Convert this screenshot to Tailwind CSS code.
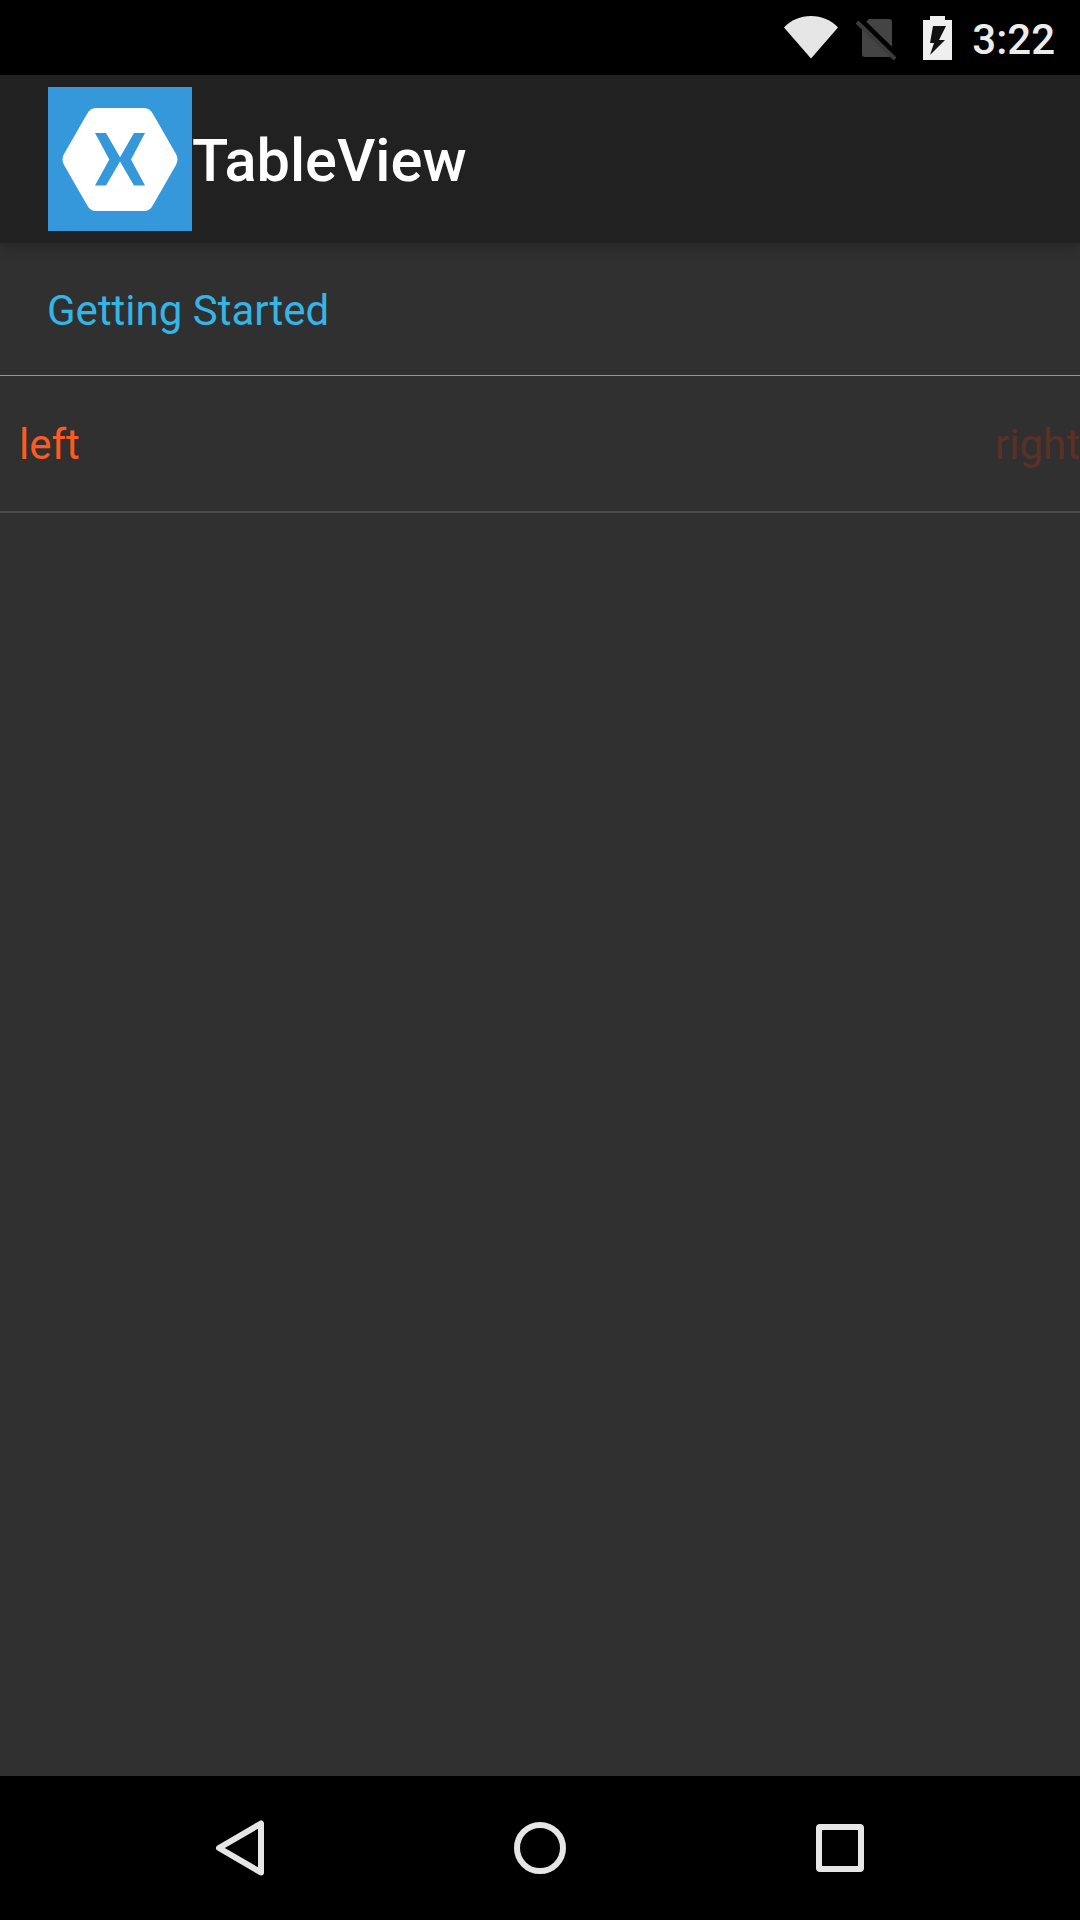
<!DOCTYPE html>
<html lang="en">
<head>
  <meta charset="UTF-8" />
  <title>TableView</title>
  <script src="https://cdn.jsdelivr.net/npm/@tailwindcss/browser@4"></script>
</head>
<body class="bg-[#303030] font-['Roboto',sans-serif]">
<div class="w-[1080px] h-[1920px] flex flex-col overflow-hidden">

  <!-- status bar -->
  <div class="h-[75px] bg-black flex items-center justify-end pr-[25px] shrink-0">
    <svg class="w-[54px] h-[44px] -mt-[1px]" viewBox="0 0 54 44"><path d="M0 12.500C7 5 16.500 1 27 1s20 4 27 11.500L27 43.500z" fill="#e6e6e6"/></svg>
    <svg class="w-[44px] h-[44px] ml-[17px]" viewBox="0 0 44 44">
      <path d="M14 3h20a3 3 0 0 1 3 3v32a3 3 0 0 1-3 3H10a3 3 0 0 1-3-3V10z" fill="#444"/>
      <path d="M5 3l38 37" stroke="#000" stroke-width="5"/>
      <path d="M2 6l38 37" stroke="#3c3c3c" stroke-width="4"/>
    </svg>
    <svg class="w-[29px] h-[44px] ml-[24px]" viewBox="0 0 29 44"><path d="M7 0h15v4h7v40H0V4h7z" fill="#efefef"/><path d="M10 10h13l-7 14h6L7 39l4-12H7z" fill="#111"/></svg>
    <span class="ml-[20px] mt-[5px] text-[42px] font-medium leading-none text-[#ececec]">3:22</span>
  </div>

  <!-- toolbar -->
  <div class="h-[168px] bg-[#212121] flex items-center pl-[48px] shrink-0 relative shadow-[0_6px_12px_rgba(0,0,0,0.2)]">
    <div class="w-[144px] h-[144px] bg-[#3498db] flex items-center justify-center">
      <svg class="w-[116px] h-[103px]" viewBox="0 0 116 103">
        <path d="M34 0h48c4 0 7 2 9 6l23 40c2 3.500 2 7 0 11L91 97c-2 4-5 6-9 6H34c-4 0-7-2-9-6L2 57c-2-4-2-7.500 0-11L25 6c2-4 5-6 9-6z" fill="#fff"/>
        <path d="M33 25h11l14 24.200L72 25h11L69 51.500 83 77.500H72L58 53.500 44 77.500H33L47.300 51.500z" fill="#3498db"/>
      </svg>
    </div>
    <span class="text-[59.5px] font-medium text-white leading-none mt-[6px]">TableView</span>
  </div>

  <!-- section header -->
  <div class="h-[133px] flex items-center pl-[47px] shrink-0 border-b border-[#33b5e5] pt-[4px]">
    <span class="text-[42px] text-[#33b5e5] leading-none">Getting Started</span>
  </div>

  <!-- cell -->
  <div class="h-[137px] flex items-center justify-between pl-[19px] pt-[2px] border-b-2 border-[#4a4a4a] shrink-0">
    <span class="text-[42px] text-[#ff5a1f] leading-none">left</span>
    <span class="text-[42px] text-[#5b3027] leading-none">right</span>
  </div>

  <div class="flex-1"></div>

  <!-- nav bar -->
  <div class="h-[144px] bg-black grid grid-cols-3 px-[90px] items-center justify-items-center shrink-0">
    <svg class="w-[50px] h-[58px]" viewBox="0 0 50 58"><path d="M46 4.500v49L4 29z" fill="none" stroke="#e6e6e6" stroke-width="6" stroke-linejoin="round"/></svg>
    <div class="w-[52px] h-[52px] rounded-full border-[6px] border-[#e6e6e6]"></div>
    <div class="w-[48px] h-[48px] rounded-[4px] border-[6px] border-[#e6e6e6]"></div>
  </div>
</div>
</body>
</html>
